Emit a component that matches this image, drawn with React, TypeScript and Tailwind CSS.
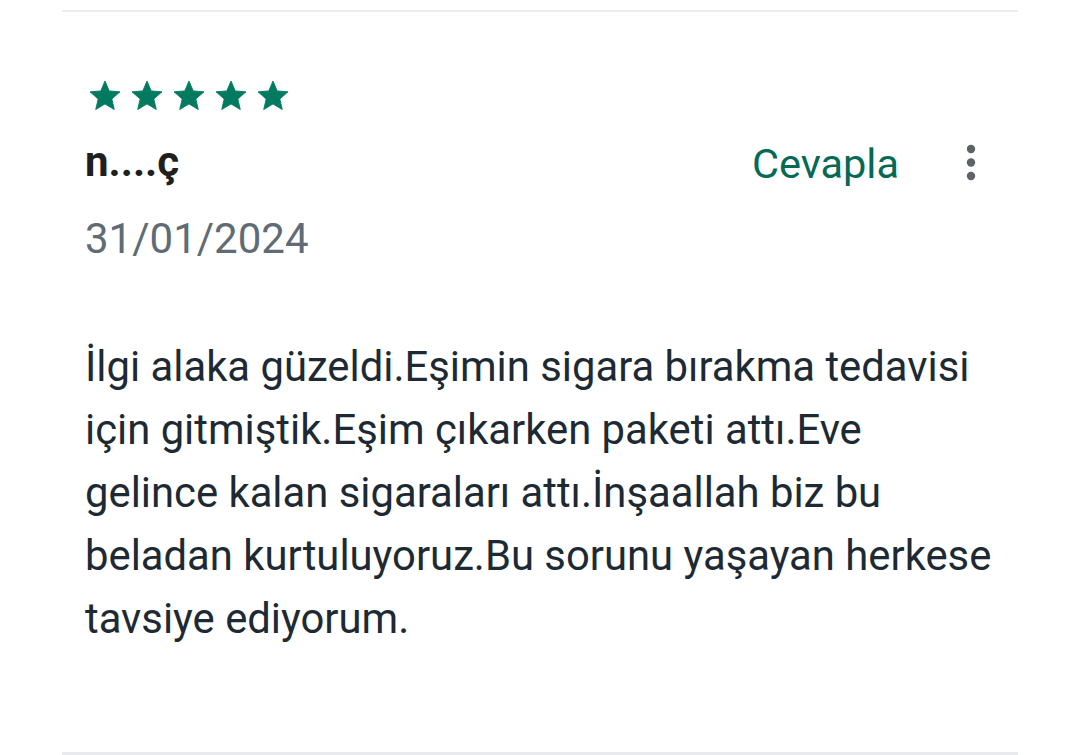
const STAR_PATH =
  "M12 17.27L18.18 21l-1.64-7.03L22 9.24l-7.19-.61L12 2 9.19 8.63 2 9.24l5.46 4.73L5.82 21z";

function Star() {
  return (
    <svg width={36} height={36} viewBox="0 0 24 24" aria-hidden="true">
      <path d={STAR_PATH} fill="#017a5f" stroke="#017a5f" strokeWidth={0.6} strokeLinejoin="round" />
    </svg>
  );
}

function MoreDots() {
  return (
    <svg width={16} height={40} viewBox="0 0 16 40" aria-hidden="true">
      <circle cx={8} cy={7} r={4.2} fill="#5f6368" />
      <circle cx={8} cy={20.5} r={4.2} fill="#5f6368" />
      <circle cx={8} cy={34} r={4.2} fill="#5f6368" />
    </svg>
  );
}

const body =
  "İlgi alaka güzeldi.Eşimin sigara bırakma tedavisi için gitmiştik.Eşim çıkarken paketi attı.Eve gelince kalan sigaraları attı.İnşaallah biz bu beladan kurtuluyoruz.Bu sorunu yaşayan herkese tavsiye ediyorum.";

export default function App() {
  return (
    <div className="h-[755px] w-[1080px] overflow-hidden bg-white font-['Roboto','Liberation_Sans',sans-serif]">
      <div className="mx-[62px] pt-[10px]">
        <div className="border-t-2 border-[#ececec]" />
        <div className="flex h-[743px] flex-col border-b-[3px] border-[#e8eaed] pl-[23px] pr-[40px]">
          <div className="mt-[66px] flex gap-[6px] pl-[2px]">
            <Star />
            <Star />
            <Star />
            <Star />
            <Star />
          </div>
          <div className="mt-[23px] flex items-center">
            <span className="text-[42px] font-bold leading-[50px] text-[#1f1f1f]">n....ç</span>
            <span className="ml-auto translate-y-[2px] text-[41.5px] leading-[50px] text-[#056a55]">Cevapla</span>
            <span className="ml-[64px] mr-[-1px] flex items-center">
              <MoreDots />
            </span>
          </div>
          <div className="mt-[27px] text-[42px] leading-[50px] text-[#5f6b75]">31/01/2024</div>
          <p className="mt-[71px] w-[920px] text-[41.8px] leading-[63px] text-[#1d2a33]">{body}</p>
        </div>
      </div>
    </div>
  );
}
